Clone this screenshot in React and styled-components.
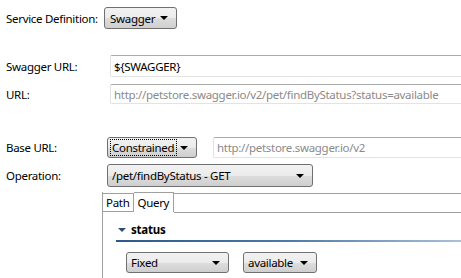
import React from 'react';
import styled, { createGlobalStyle } from 'styled-components';

const GlobalStyle = createGlobalStyle`
  html, body {
    margin: 0;
    padding: 0;
    background: #fff;
    overflow: hidden;
  }
  body {
    font-family: "Noto Sans", "Open Sans", sans-serif;
    font-size: 11.5px;
    letter-spacing: -0.3px;
    color: #000;
  }
`;

const Form = styled.div`
  width: 461px;
  height: 278px;
  padding: 7px 0 0 6px;
  box-sizing: border-box;
  display: flex;
  flex-direction: column;
  overflow: hidden;
`;

const Row = styled.div`
  display: grid;
  grid-template-columns: 96px 1fr;
  align-items: center;
  height: ${p => p.$h}px;
  margin-top: ${p => p.$mt || 0}px;
  white-space: nowrap;
`;

const Label = styled.span``;

const Controls = styled.div`
  display: flex;
  align-items: center;
  gap: ${p => p.$gap || 0}px;
  height: 100%;
  margin-left: ${p => p.$ml || 0}px;
  min-width: 0;
`;

const Select = styled.div`
  position: relative;
  box-sizing: border-box;
  width: ${p => p.$w}px;
  height: ${p => p.$h || 22}px;
  flex: none;
  border: 1px solid #707070;
  border-radius: 3px;
  background: linear-gradient(#f2f2f2 0%, #ebebeb 50%, #dddddd 51%, #cfcfcf 100%);
  display: flex;
  align-items: center;
  padding-left: ${p => p.$pl || 4}px;
`;

const Focus = styled.span`
  outline: 1px dotted #000;
  padding: 0 2px 0 1px;
  margin-left: -1px;
  line-height: 15px;
`;

const Arrow = styled.span`
  position: absolute;
  right: 8px;
  top: 50%;
  margin-top: -2px;
  width: 0;
  height: 0;
  border-left: 4px solid transparent;
  border-right: 4px solid transparent;
  border-top: 4px solid #000;
`;

const TextField = styled.div`
  box-sizing: border-box;
  height: ${p => p.$h || 22}px;
  flex: 1;
  min-width: 0;
  border: 1px solid #e3e3e3;
  border-top-color: #a9a9a9;
  border-right: none;
  border-radius: 2px 0 0 2px;
  display: flex;
  align-items: center;
  padding-left: 3px;
  color: ${p => (p.$muted ? '#8a8a8a' : '#000')};
  overflow: hidden;
`;

const Folder = styled.div`
  margin: 5px 0 0 96px;
  flex: 1;
  border-left: 1px solid #a0a0a0;
  display: flex;
  flex-direction: column;
`;

const TabStrip = styled.div`
  display: flex;
  height: 19px;
  border-top: 1px solid #a0a0a0;
  margin-top: 1px;
`;

const Tab = styled.div`
  height: ${p => (p.$active ? 20 : 18)}px;
  margin-top: ${p => (p.$active ? -2 : 0)}px;
  padding: 0 4px 0 3px;
  box-sizing: border-box;
  border-right: 1px solid #a0a0a0;
  border-top: ${p => (p.$active ? '1px solid #a0a0a0' : 'none')};
  border-bottom: ${p => (p.$active ? 'none' : '1px solid #a0a0a0')};
  background: #fff;
  display: flex;
  align-items: center;
`;

const StripRest = styled.div`
  flex: 1;
  border-bottom: 1px solid #a0a0a0;
  height: 18px;
`;

const Section = styled.div`
  padding: 8px 0 0 13px;
`;

const SectionHead = styled.div`
  display: flex;
  align-items: center;
  gap: 5px;
  height: 16px;
  padding-left: 2px;
  font-weight: bold;
  letter-spacing: -0.2px;
`;

const Twisty = styled.span`
  width: 0;
  height: 0;
  border-left: 4px solid transparent;
  border-right: 4px solid transparent;
  border-top: 4px solid #2a4f77;
  margin-top: 1px;
`;

const Rule = styled.div`
  height: 2px;
  margin-top: 3px;
  background: linear-gradient(to right, #2b5a8a 0%, #4f7aa5 50%, #a9c1d9 100%);
`;

const ParamRow = styled.div`
  display: flex;
  gap: 14px;
  margin: 10px 0 0 10px;
`;

export default function App() {
  return (
    <>
      <GlobalStyle />
      <Form>
        <Row $h={22}>
          <Label>Service Definition:</Label>
          <Controls $ml={2}>
            <Select $w={73} $pl={5}>
              Swagger
              <Arrow />
            </Select>
          </Controls>
        </Row>

        <Row $h={22} $mt={26}>
          <Label>Swagger URL:</Label>
          <Controls $ml={8}>
            <TextField>{'${SWAGGER}'}</TextField>
          </Controls>
        </Row>
        <Row $h={20} $mt={7}>
          <Label>URL:</Label>
          <Controls $ml={8}>
            <TextField $h={20} $muted>
              http://petstore.swagger.io/v2/pet/findByStatus?status=available
            </TextField>
          </Controls>
        </Row>

        <Row $h={21} $mt={33}>
          <Label>Base URL:</Label>
          <Controls $ml={5} $gap={16}>
            <Select $w={90} $h={21}>
              <Focus>Constrained</Focus>
              <Arrow />
            </Select>
            <TextField $h={21} $muted>
              http://petstore.swagger.io/v2
            </TextField>
          </Controls>
        </Row>
        <Row $h={23} $mt={6}>
          <Label>Operation:</Label>
          <Controls $ml={5}>
            <Select $w={206} $h={23}>
              /pet/findByStatus - GET
              <Arrow />
            </Select>
          </Controls>
        </Row>

        <Folder>
          <TabStrip>
            <Tab>Path</Tab>
            <Tab $active>Query</Tab>
            <StripRest />
          </TabStrip>
          <Section>
            <SectionHead>
              <Twisty />
              status
            </SectionHead>
            <Rule />
            <ParamRow>
              <Select $w={103} $h={21}>
                Fixed
                <Arrow />
              </Select>
              <Select $w={74} $h={21}>
                available
                <Arrow />
              </Select>
            </ParamRow>
          </Section>
        </Folder>
      </Form>
    </>
  );
}
